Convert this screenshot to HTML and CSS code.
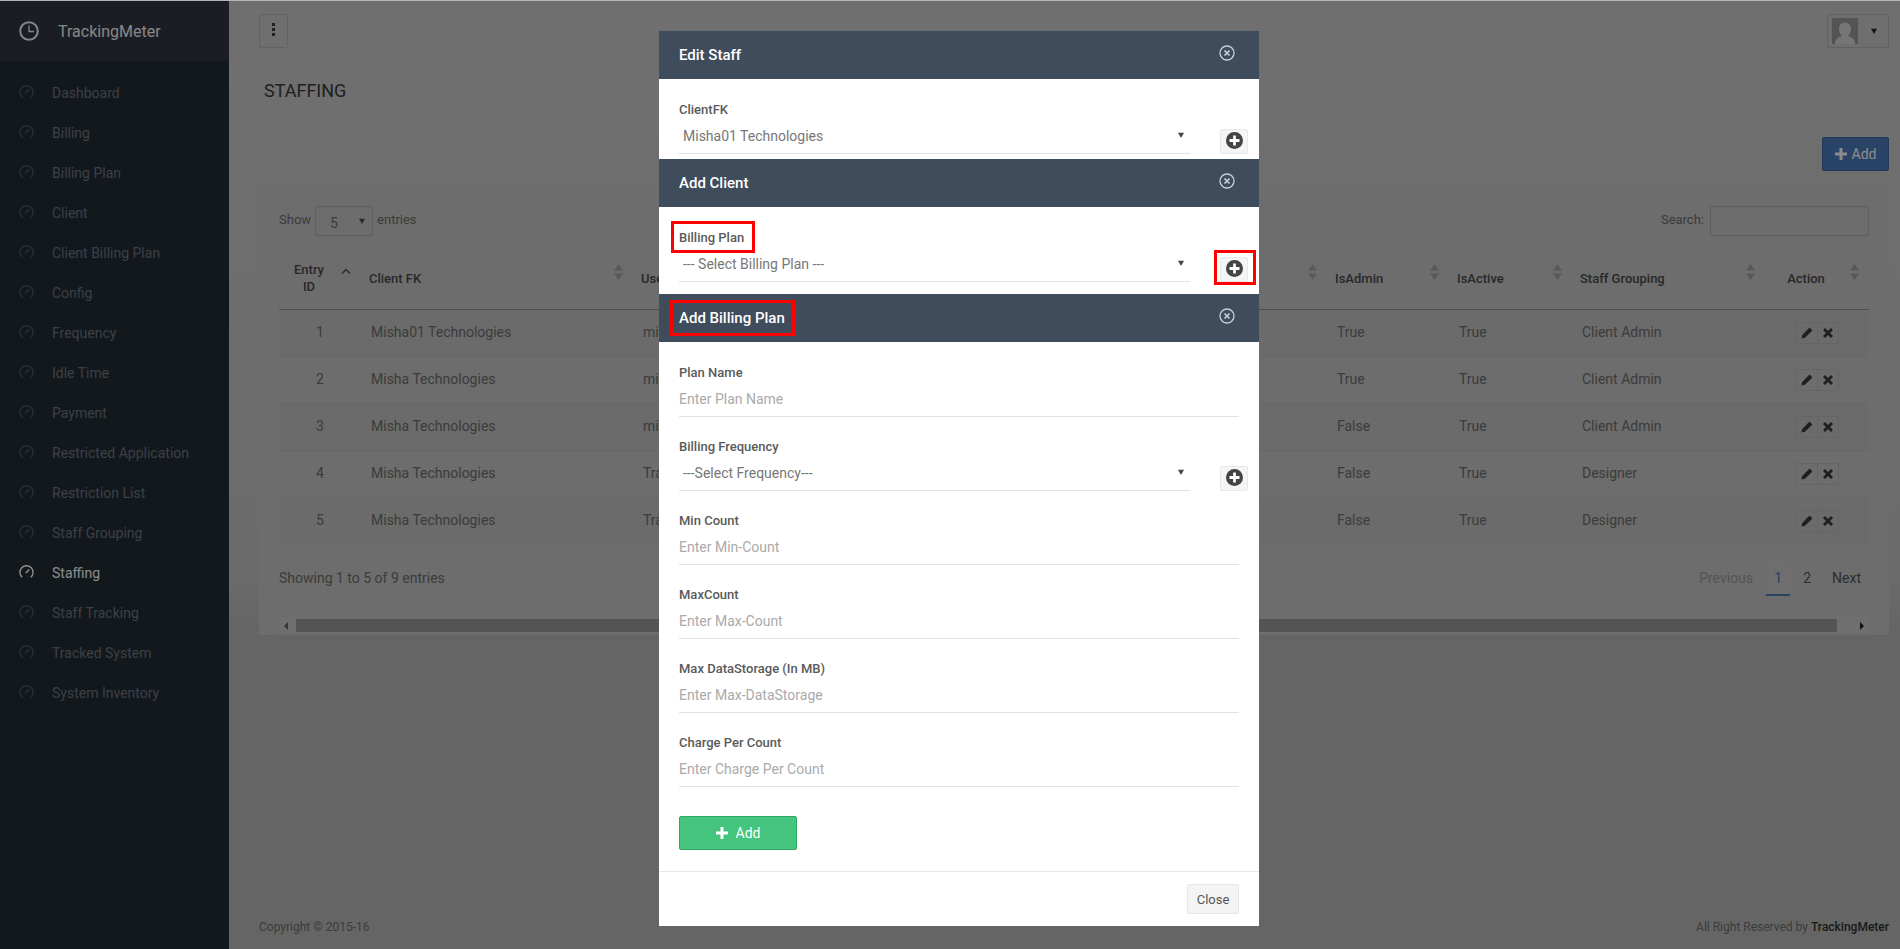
FILE: index.html
```html
<!DOCTYPE html>
<html lang="en">
<head>
	<meta charset="UTF-8">
	<title>Staffing - TrackingMeter</title>
	<link rel="stylesheet" href="styles.css">
</head>
<body>
	<svg class="defs" width="0" height="0">
		<symbol id="gauge" viewBox="0 0 16 16">
			<path d="M3.5 14.2A7 7 0 1 1 12.500 14.200" fill="none" stroke="currentColor" stroke-width="1.500"/>
			<path d="M7.300 9.500L10.800 5.800" stroke="currentColor" stroke-width="1.600"/>
		</symbol>
		<symbol id="sort" viewBox="0 0 9 16">
			<path d="M4.500 0L9 6.500H0zM0 9.500H9L4.500 16z" fill="currentColor"/>
		</symbol>
		<symbol id="plus-circle" viewBox="0 0 16 16">
			<circle cx="8" cy="8" r="8" fill="#444"/>
			<path d="M6.700 3.300h2.600v3.400h3.400v2.600H9.300v3.400H6.700V9.300H3.300V6.700h3.400z" fill="#fff"/>
		</symbol>
		<symbol id="close-circle" viewBox="0 0 16 16">
			<circle cx="8" cy="8" r="7" fill="none" stroke="currentColor" stroke-width="1.300"/>
			<path d="M5.500 5.500l5 5M10.500 5.500l-5 5" stroke="currentColor" stroke-width="1.700"/>
		</symbol>
		<symbol id="plus" viewBox="0 0 12 12">
			<path d="M4.500 0h3v4.500H12v3H7.500V12h-3V7.500H0v-3h4.500z" fill="currentColor"/>
		</symbol>
		<symbol id="pencil" viewBox="0 0 12 12">
			<path d="M8.600 .6l2.800 2.800-7.400 7.400-3.600 .8 .8-3.600z" fill="currentColor"/>
		</symbol>
		<symbol id="cross" viewBox="0 0 12 12">
			<path d="M1 3l2-2 3 3 3-3 2 2-3 3 3 3-2 2-3-3-3 3-2-2 3-3z" fill="currentColor"/>
		</symbol>
		<symbol id="arrow-down" viewBox="0 0 8 8">
			<path d="M0 1H8L4 8z" fill="currentColor"/>
		</symbol>
	</svg>

	<div class="app">
		<aside class="sidebar">
			<div class="brand">
				<svg class="brand-icon" viewBox="0 0 20 20">
					<circle cx="10" cy="10" r="8.800" fill="none" stroke="currentColor" stroke-width="2"/>
					<path d="M10 4.500V10.500H15" fill="none" stroke="currentColor" stroke-width="1.300"/>
				</svg>
				<span>TrackingMeter</span>
			</div>
			<ul class="nav">
				<li><svg class="nav-icon"><use href="#gauge"/></svg>Dashboard</li>
				<li><svg class="nav-icon"><use href="#gauge"/></svg>Billing</li>
				<li><svg class="nav-icon"><use href="#gauge"/></svg>Billing Plan</li>
				<li><svg class="nav-icon"><use href="#gauge"/></svg>Client</li>
				<li><svg class="nav-icon"><use href="#gauge"/></svg>Client Billing Plan</li>
				<li><svg class="nav-icon"><use href="#gauge"/></svg>Config</li>
				<li><svg class="nav-icon"><use href="#gauge"/></svg>Frequency</li>
				<li><svg class="nav-icon"><use href="#gauge"/></svg>Idle Time</li>
				<li><svg class="nav-icon"><use href="#gauge"/></svg>Payment</li>
				<li><svg class="nav-icon"><use href="#gauge"/></svg>Restricted Application</li>
				<li><svg class="nav-icon"><use href="#gauge"/></svg>Restriction List</li>
				<li><svg class="nav-icon"><use href="#gauge"/></svg>Staff Grouping</li>
				<li class="active"><svg class="nav-icon"><use href="#gauge"/></svg>Staffing</li>
				<li><svg class="nav-icon"><use href="#gauge"/></svg>Staff Tracking</li>
				<li><svg class="nav-icon"><use href="#gauge"/></svg>Tracked System</li>
				<li><svg class="nav-icon"><use href="#gauge"/></svg>System Inventory</li>
			</ul>
		</aside>

		<div class="main">
			<header class="topbar">
				<button class="menu-btn"><span></span><span></span><span></span></button>
				<div class="user-btn">
					<svg class="avatar" viewBox="0 0 26 26">
						<rect width="26" height="26" fill="#9a9a9a"/>
						<path d="M3 26c0-5 3-6.500 7-8-2-2-3-4-3-7 0-4 2.500-6.500 6-6.500s6 2.500 6 6.500c0 3-1 5-3 7 4 1.500 7 3 7 8z" fill="#d8d8d8"/>
					</svg>
					<svg class="caret" viewBox="0 0 8 8"><use href="#arrow-down"/></svg>
				</div>
			</header>

			<h1 class="page-title">Staffing</h1>
			<div class="toolbar">
				<button class="btn-add"><svg class="btn-plus"><use href="#plus"/></svg>Add</button>
			</div>

			<section class="card">
				<div class="table-top">
					<div class="show">
						Show
						<div class="mini-select">5<svg class="select-arrow"><use href="#arrow-down"/></svg></div>
						entries
					</div>
					<div class="search">
						Search:
						<div class="search-box"></div>
					</div>
				</div>

				<table class="data">
					<colgroup>
						<col class="c-id"><col class="c-client"><col class="c-user"><col class="c-admin"><col class="c-active"><col class="c-group"><col class="c-action">
					</colgroup>
					<thead>
						<tr>
							<th class="center">Entry ID<svg class="sort-up" viewBox="0 0 10 6"><path d="M1 5.500L5 1.500L9 5.500" fill="none" stroke="currentColor" stroke-width="1.500"/></svg></th>
							<th>Client FK<svg class="sort"><use href="#sort"/></svg></th>
							<th>User Name<svg class="sort"><use href="#sort"/></svg></th>
							<th>IsAdmin<svg class="sort"><use href="#sort"/></svg></th>
							<th>IsActive<svg class="sort"><use href="#sort"/></svg></th>
							<th>Staff Grouping<svg class="sort"><use href="#sort"/></svg></th>
							<th class="center">Action<svg class="sort"><use href="#sort"/></svg></th>
						</tr>
					</thead>
					<tbody>
						<tr>
							<td class="center">1</td><td>Misha01 Technologies</td><td>misha</td><td>True</td><td>True</td><td>Client Admin</td>
							<td class="center action-cell"><div class="actions"><span><svg class="act-icon"><use href="#pencil"/></svg></span><span><svg class="act-icon"><use href="#cross"/></svg></span></div></td>
						</tr>
						<tr>
							<td class="center">2</td><td>Misha Technologies</td><td>misha</td><td>True</td><td>True</td><td>Client Admin</td>
							<td class="center action-cell"><div class="actions"><span><svg class="act-icon"><use href="#pencil"/></svg></span><span><svg class="act-icon"><use href="#cross"/></svg></span></div></td>
						</tr>
						<tr>
							<td class="center">3</td><td>Misha Technologies</td><td>misha</td><td>False</td><td>True</td><td>Client Admin</td>
							<td class="center action-cell"><div class="actions"><span><svg class="act-icon"><use href="#pencil"/></svg></span><span><svg class="act-icon"><use href="#cross"/></svg></span></div></td>
						</tr>
						<tr>
							<td class="center">4</td><td>Misha Technologies</td><td>Tracy</td><td>False</td><td>True</td><td>Designer</td>
							<td class="center action-cell"><div class="actions"><span><svg class="act-icon"><use href="#pencil"/></svg></span><span><svg class="act-icon"><use href="#cross"/></svg></span></div></td>
						</tr>
						<tr>
							<td class="center">5</td><td>Misha Technologies</td><td>Tracy</td><td>False</td><td>True</td><td>Designer</td>
							<td class="center action-cell"><div class="actions"><span><svg class="act-icon"><use href="#pencil"/></svg></span><span><svg class="act-icon"><use href="#cross"/></svg></span></div></td>
						</tr>
					</tbody>
				</table>

				<div class="table-bottom">
					<div class="info">Showing 1 to 5 of 9 entries</div>
					<div class="pager">
						<span class="prev">Previous</span>
						<span class="page on">1</span>
						<span class="page">2</span>
						<span class="next">Next</span>
					</div>
				</div>

				<div class="scrollbar">
					<div class="scroll-arrow left"></div>
					<div class="scroll-thumb"></div>
					<div class="scroll-arrow right"></div>
				</div>
			</section>

			<footer class="footer">
				<div>Copyright © 2015-16</div>
				<div>All Right Reserved by <b>TrackingMeter</b></div>
			</footer>
		</div>
	</div>

	<div class="overlay">
		<div class="modal">
			<div class="modal-head">
				<span>Edit Staff</span>
				<svg class="modal-close"><use href="#close-circle"/></svg>
			</div>
			<div class="modal-body first">
				<div class="field-row">
					<div class="field">
						<label>ClientFK</label>
						<div class="select">Misha01 Technologies<svg class="select-arrow"><use href="#arrow-down"/></svg></div>
					</div>
					<div class="add-small"><svg class="add-small-icon"><use href="#plus-circle"/></svg></div>
				</div>
			</div>

			<div class="modal-head">
				<span>Add Client</span>
				<svg class="modal-close"><use href="#close-circle"/></svg>
			</div>
			<div class="modal-body second">
				<div class="field-row">
					<div class="field">
						<label>Billing Plan</label>
						<div class="select">--- Select Billing Plan ---<svg class="select-arrow"><use href="#arrow-down"/></svg></div>
					</div>
					<div class="add-small"><svg class="add-small-icon"><use href="#plus-circle"/></svg></div>
				</div>
			</div>

			<div class="modal-head">
				<span>Add Billing Plan</span>
				<svg class="modal-close"><use href="#close-circle"/></svg>
			</div>
			<div class="modal-body third">
				<div class="field">
					<label>Plan Name</label>
					<div class="input">Enter Plan Name</div>
				</div>
				<div class="field-row">
					<div class="field">
						<label>Billing Frequency</label>
						<div class="select">---Select Frequency---<svg class="select-arrow"><use href="#arrow-down"/></svg></div>
					</div>
					<div class="add-small"><svg class="add-small-icon"><use href="#plus-circle"/></svg></div>
				</div>
				<div class="field">
					<label>Min Count</label>
					<div class="input">Enter Min-Count</div>
				</div>
				<div class="field">
					<label>MaxCount</label>
					<div class="input">Enter Max-Count</div>
				</div>
				<div class="field">
					<label>Max DataStorage (In MB)</label>
					<div class="input">Enter Max-DataStorage</div>
				</div>
				<div class="field">
					<label>Charge Per Count</label>
					<div class="input">Enter Charge Per Count</div>
				</div>
				<button class="btn-green"><svg class="btn-plus"><use href="#plus"/></svg>Add</button>
			</div>
			<div class="modal-foot">
				<button class="btn-close">Close</button>
			</div>

			<span class="mark mark-label"></span>
			<span class="mark mark-plus"></span>
			<span class="mark mark-title"></span>
		</div>
	</div>
</body>
</html>
```

FILE: styles.css
```css
*{
	margin: 0;
	padding: 0;
	box-sizing: border-box;
}
html,body{
	height: 949px;
	overflow: hidden;
}
body{
	font-family: Roboto, "Liberation Sans", sans-serif;
	font-size: 14px;
	color: #6d6d6d;
	border-top: 1px solid #b4b4b4;
}
button{
	font-family: inherit;
	font-size: 14px;
}
ul{
	list-style: none;
}
.defs{
	position: absolute;
}
.app{
	display: flex;
	height: 948px;
}

/* sidebar */
.sidebar{
	width: 229px;
	flex-shrink: 0;
	background-color: #242c35;
	color: #6d7681;
}
.brand{
	height: 60px;
	padding-left: 19px;
	display: flex;
	align-items: center;
	gap: 19px;
	background-color: #313843;
	color: #f4f4f4;
	font-size: 16px;
}
.brand-icon{
	width: 20px;
	height: 20px;
	color: #f2f2f2;
}
.nav{
	padding-top: 12px;
}
.nav li{
	height: 40px;
	padding-left: 19px;
	display: flex;
	align-items: center;
	gap: 18px;
}
.nav-icon{
	width: 15px;
	height: 15px;
	color: #4c5460;
	margin-top: -4px;
}
.nav li.active{
	color: #fff;
}
.nav li.active .nav-icon{
	color: #fff;
}

/* main column */
.main{
	flex: 1;
	min-width: 0;
	padding: 0 11px 0 30px;
	display: flex;
	flex-direction: column;
	background: linear-gradient(#cbcbcb, #c4c4c4 60%, #b9b9b9 66%);
}
.topbar{
	height: 60px;
	display: flex;
	align-items: center;
	justify-content: space-between;
}
.menu-btn{
	width: 29px;
	height: 34px;
	display: flex;
	flex-direction: column;
	align-items: center;
	justify-content: center;
	gap: 2px;
	background-color: #cbcbcb;
	border: 1px solid #b3b3b3;
	border-radius: 2px;
	padding-bottom: 3px;
}
.menu-btn span{
	width: 3px;
	height: 3px;
	background-color: #3a3a3a;
}
.user-btn{
	width: 62px;
	height: 34px;
	padding-left: 4px;
	display: flex;
	align-items: center;
	gap: 13px;
	border: 1px solid #b3b3b3;
	border-radius: 2px;
}
.avatar{
	width: 26px;
	height: 26px;
}
.caret{
	width: 6px;
	height: 6px;
	color: #222;
}
.page-title{
	margin-top: 18px;
	padding-left: 5px;
	font-size: 18px;
	font-weight: 400;
	line-height: 24px;
	text-transform: uppercase;
	color: #3a3a3a;
}
.toolbar{
	margin-top: 34px;
	display: flex;
	justify-content: flex-end;
}
.btn-add{
	width: 67px;
	height: 34px;
	display: flex;
	align-items: center;
	justify-content: center;
	gap: 5px;
	color: #fff;
	background-color: #4e7cbd;
	border: 1px solid #3a66a4;
	border-radius: 2px;
}
.btn-plus{
	width: 12px;
	height: 12px;
}

/* table card */
.card{
	margin-top: 15px;
	height: 449px;
	padding: 20px 20px 2px;
	background-color: #c6c6c6;
}
.table-top{
	display: flex;
	justify-content: space-between;
	height: 30px;
	margin-bottom: 14px;
	font-size: 13px;
}
.show,.search{
	display: flex;
	align-items: center;
	gap: 4px;
	padding-bottom: 4px;
}
.mini-select{
	position: relative;
	width: 58px;
	height: 30px;
	padding-left: 14px;
	line-height: 32px;
	font-size: 14px;
	border: 1px solid #adadad;
	border-radius: 2px;
	margin: 4px 0 0 0;
}
.mini-select .select-arrow{
	right: 7px;
	top: 11px;
	color: #4a4a4a;
}
.search-box{
	width: 159px;
	height: 30px;
	margin: 4px 0 0 2px;
	border: 1px solid #adadad;
	border-radius: 2px;
}
.data{
	width: 1590px;
	table-layout: fixed;
	border-collapse: collapse;
}
.c-id{ width: 82px; }
.c-client{ width: 272px; }
.c-user{ width: 694px; }
.c-admin{ width: 122px; }
.c-active{ width: 123px; }
.c-group{ width: 193px; }
.c-action{ width: 104px; }
.data th{
	position: relative;
	height: 59px;
	padding: 0 30px 2px 8px;
	text-align: left;
	font-size: 13px;
	font-weight: 500;
	line-height: 17px;
	color: #4a4a4a;
	border-bottom: 1px solid #8f8f8f;
}
.data td{
	height: 47px;
	padding: 0 10px 2px;
	border-bottom: 1px solid #bcbcbc;
}
.data td.action-cell{
	padding-bottom: 0;
}
.data tbody tr:nth-child(odd){
	background-color: rgba(0,0,0,0.012);
}
.data tbody tr:last-child td{
	border-bottom: 0;
}
.data th.center,.data td.center{
	text-align: center;
}
.sort{
	position: absolute;
	right: 10px;
	top: 14px;
	width: 9px;
	height: 16px;
	color: #a3a3a3;
}
.sort-up{
	position: absolute;
	right: 10px;
	top: 18px;
	width: 10px;
	height: 6px;
	color: #545454;
}
.actions{
	display: inline-flex;
	vertical-align: middle;
	height: 22px;
	border: 1px solid #b8b8b8;
	border-radius: 2px;
}
.actions span{
	width: 21px;
	display: flex;
	align-items: center;
	justify-content: center;
}
.actions span + span{
	border-left: 1px solid #b8b8b8;
}
.act-icon{
	width: 12px;
	height: 12px;
	color: #3a3a3a;
}
.table-bottom{
	margin-top: 18px;
	height: 34px;
	display: flex;
	align-items: center;
	justify-content: space-between;
}
.info{
	padding-bottom: 2px;
}
.pager{
	display: flex;
	align-items: center;
	height: 34px;
	padding-right: 8px;
}
.prev{
	color: #999;
	margin-right: 13px;
	padding-bottom: 2px;
}
.page{
	width: 24px;
	height: 34px;
	line-height: 32px;
	text-align: center;
	margin-right: 5px;
	color: #545454;
}
.page.on{
	color: #4a78b0;
	background-color: #c9c9c9;
	border-bottom: 2px solid #4a78b0;
}
.next{
	margin-left: 8px;
	color: #545454;
	padding-bottom: 2px;
}
.scrollbar{
	margin-top: 21px;
	height: 16px;
	padding-top: 2px;
	display: flex;
	background-color: #cbcbcb;
}
.scroll-arrow{
	position: relative;
	height: 13px;
}
.scroll-arrow.left{
	width: 17px;
}
.scroll-arrow.right{
	width: 32px;
}
.scroll-arrow::after{
	content: "";
	position: absolute;
	top: 3px;
	border: 4px solid transparent;
}
.scroll-arrow.left::after{
	left: 5px;
	border-right-color: #666;
	border-left-width: 0;
}
.scroll-arrow.right::after{
	right: 5px;
	border-left-color: #222;
	border-right-width: 0;
}
.scroll-thumb{
	flex: 1;
	height: 13px;
	background-color: #9a9a9a;
}
.footer{
	margin-top: auto;
	height: 29px;
	display: flex;
	justify-content: space-between;
	color: #6d6d6d;
	font-size: 12px;
}
.footer b{
	font-weight: 500;
	color: #2f2f2f;
}

/* backdrop and stacked modals */
.overlay{
	position: fixed;
	top: 1px;
	left: 0;
	right: 0;
	bottom: 0;
	padding-top: 30px;
	background-color: rgba(0,0,0,0.45);
}
.modal{
	position: relative;
	width: 600px;
	margin-left: 659px;
	background-color: #fff;
	color: #777;
}
.modal-head{
	height: 48px;
	padding: 0 24px 0 20px;
	display: flex;
	align-items: center;
	justify-content: space-between;
	background-color: #3f4c5c;
	color: #fff;
	font-size: 15px;
	font-weight: 500;
}
.modal-close{
	width: 16px;
	height: 16px;
	margin-bottom: 4px;
	color: #c9ced4;
}
.modal-body{
	padding: 20px 20px 5px;
}
.modal-body.second{
	padding-bottom: 12px;
}
.modal-body.third{
	padding-bottom: 21px;
}
.third .field,.third .field-row{
	margin-bottom: 19px;
}
.third .field-row .field{
	margin-bottom: 0;
}
.field-row{
	display: flex;
	align-items: flex-end;
	gap: 30px;
	margin-right: -9px;
}
.field-row .field{
	width: 511px;
	flex-shrink: 0;
}
.field label{
	display: block;
	height: 20px;
	line-height: 22px;
	font-size: 13px;
	font-weight: 500;
	color: #5a5a5a;
}
.select,.input{
	position: relative;
	height: 35px;
	line-height: 34px;
	border-bottom: 1px solid #e2e2e2;
}
.select{
	padding-left: 4px;
	color: #777;
}
.input{
	color: #aaa;
}
.select-arrow{
	position: absolute;
	right: 6px;
	top: 13px;
	width: 6px;
	height: 6px;
	color: #444;
}
.add-small{
	width: 28px;
	height: 25px;
	flex-shrink: 0;
	display: flex;
	align-items: center;
	justify-content: center;
	padding-bottom: 2px;
	background-color: #f5f5f5;
	border: 1px solid #e8e8e8;
	border-radius: 2px;
}
.add-small-icon{
	width: 17px;
	height: 17px;
}
.btn-green{
	margin-top: 29px;
	width: 118px;
	height: 34px;
	display: flex;
	align-items: center;
	justify-content: center;
	gap: 8px;
	color: #fff;
	background-color: #44c47c;
	border: 1px solid #2fa863;
	border-radius: 2px;
}
.modal-foot{
	height: 55px;
	padding: 12px 20px;
	display: flex;
	justify-content: flex-end;
	border-top: 1px solid #e8e8e8;
}
.btn-close{
	width: 52px;
	height: 30px;
	font-size: 13px;
	color: #555;
	background-color: #f4f4f4;
	border: 1px solid #e6e6e6;
	border-radius: 2px;
}

/* red annotations drawn on top of the screenshot */
.mark{
	position: absolute;
	border: 3px solid #f00;
}
.mark-label{
	left: 12px;
	top: 190px;
	width: 84px;
	height: 32px;
}
.mark-plus{
	left: 555px;
	top: 219px;
	width: 42px;
	height: 35px;
}
.mark-title{
	left: 11px;
	top: 269px;
	width: 125px;
	height: 36px;
}
```
